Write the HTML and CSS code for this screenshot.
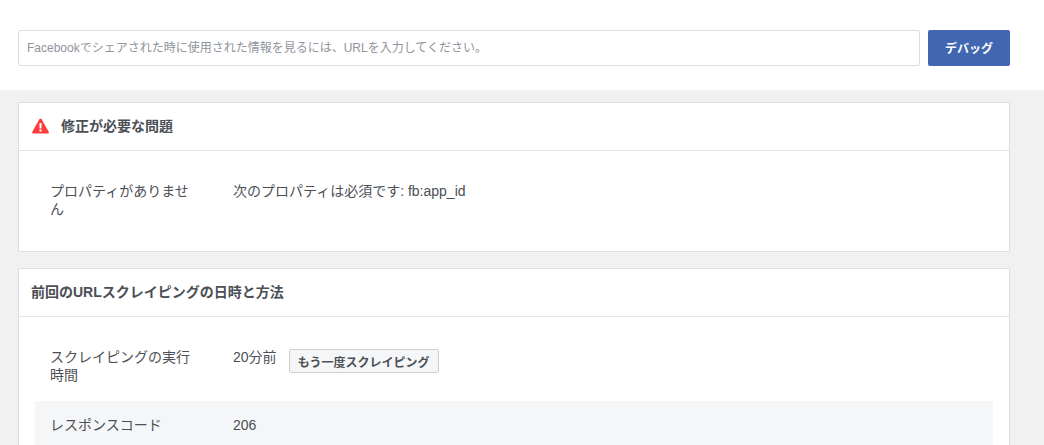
FILE: index.html
```html
<!DOCTYPE html>
<html lang="ja">
<head>
    <meta charset="UTF-8">
    <title>シェアデバッガー</title>
    <link rel="stylesheet" href="styles.css">
</head>
<body>
    <div class="search-bar">
        <input class="url-input" type="text" placeholder="Facebookでシェアされた時に使用された情報を見るには、URLを入力してください。">
        <button class="debug-button">デバッグ</button>
    </div>
    <div class="content">
        <div class="card">
            <div class="card-header">
                <svg class="warning-icon" xmlns="http://www.w3.org/2000/svg" width="17" height="16" viewBox="0 0 17 16">
                    <path fill="#fa3e3e" d="M8.5 0.5 C9 0.5 9.3 0.7 9.6 1.2 L16.8 14 C17.2 14.8 16.8 15.5 16 15.5 L1 15.5 C0.2 15.5 -0.2 14.8 0.2 14 L7.4 1.2 C7.7 0.7 8 0.5 8.5 0.5 Z"/>
                    <rect fill="#fff" x="7.5" y="5" width="2" height="5.5"/>
                    <rect fill="#fff" x="7.5" y="11.5" width="2" height="2"/>
                </svg>
                <h3 class="card-title">修正が必要な問題</h3>
            </div>
            <div class="card-body">
                <div class="row">
                    <div class="row-label">プロパティがありません</div>
                    <div class="row-value">次のプロパティは必須です: fb:app_id</div>
                </div>
            </div>
        </div>
        <div class="card card-cut">
            <div class="card-header">
                <h3 class="card-title">前回のURLスクレイピングの日時と方法</h3>
            </div>
            <div class="card-body">
                <div class="row">
                    <div class="row-label">スクレイピングの実行時間</div>
                    <div class="row-value">
                        <span>20分前</span>
                        <button class="scrape-button">もう一度スクレイピング</button>
                    </div>
                </div>
                <div class="row row-shaded">
                    <div class="row-label">レスポンスコード</div>
                    <div class="row-value">206</div>
                </div>
            </div>
        </div>
    </div>
</body>
</html>
```

FILE: styles.css
```css
html, body {
    margin: 0;
    height: 445px;
    overflow: hidden;
}
body {
    background-color: #f1f1f1;
    font-family: "Liberation Sans", "Noto Sans CJK JP", sans-serif;
    font-size: 14px;
    line-height: 18px;
    color: #4b4f56;
}
.search-bar {
    display: flex;
    height: 90px;
    box-sizing: border-box;
    padding: 30px 34px 0 18px;
    background-color: #fff;
}
.url-input {
    flex: 1;
    height: 36px;
    box-sizing: border-box;
    padding: 0 8px;
    border: 1px solid #dddfe2;
    border-radius: 2px;
    font-family: inherit;
    font-size: 12px;
    color: #4b4f56;
}
.url-input::placeholder {
    color: #90949c;
    opacity: 1;
}
.debug-button {
    width: 82px;
    height: 36px;
    margin-left: 8px;
    padding: 0 0 2px;
    border: 0;
    border-radius: 2px;
    background-color: #4267b2;
    color: #fff;
    font-family: inherit;
    font-size: 12px;
    font-weight: bold;
}
.content {
    display: flex;
    flex-direction: column;
    gap: 16px;
    padding: 12px 34px 0 18px;
}
.card {
    background-color: #fff;
    border: 1px solid #dddfe2;
}
.card-header {
    display: flex;
    align-items: center;
    height: 48px;
    box-sizing: border-box;
    padding: 0 12px 2px;
    border-bottom: 1px solid #e5e5e5;
}
.warning-icon {
    margin: 0 12px 0 1px;
}
.card-title {
    margin: 0;
    font-size: 14px;
    font-weight: bold;
    color: #4b4f56;
}
.card-body {
    padding: 16px;
}
.row {
    display: flex;
    padding: 15px 16px 17px 15px;
}
.row-shaded {
    background-color: #f5f6f7;
}
/* second card runs off the bottom of the window */
.card-cut {
    border-bottom: 0;
}
.card-cut .card-body {
    padding-bottom: 0;
}
.card-cut .row-shaded {
    padding-bottom: 11px;
}
.row-label {
    width: 152px;
    margin-right: 31px;
}
.row-value {
    display: flex;
    align-items: flex-start;
}
.scrape-button {
    width: 150px;
    height: 24px;
    margin: 1px 0 0 12px;
    padding: 0 8px;
    border: 1px solid #ccd0d5;
    border-radius: 2px;
    background-color: #f5f6f7;
    color: #4b4f56;
    font-family: inherit;
    font-size: 12px;
    font-weight: bold;
}
```
